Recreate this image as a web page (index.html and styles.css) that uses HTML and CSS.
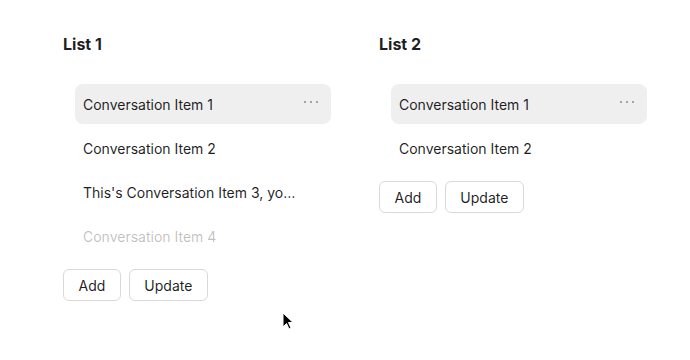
FILE: index.html
```html
<!DOCTYPE html>
<html lang="en">
<head>
    <meta charset="UTF-8">
    <title>Conversation Lists</title>
    <link rel="stylesheet" href="styles.css">
</head>
<body>

    <div class="page">
        <!-- Première liste -->
        <div class="list">
            <div class="list-title">List 1</div>
            <div class="items">
                <div class="item active">
                    <span class="item-label">Conversation Item 1</span>
                    <span class="item-more"><i></i><i></i><i></i></span>
                </div>
                <div class="item">
                    <span class="item-label">Conversation Item 2</span>
                </div>
                <div class="item">
                    <span class="item-label">This's Conversation Item 3, you can click me!</span>
                </div>
                <div class="item disabled">
                    <span class="item-label">Conversation Item 4</span>
                </div>
            </div>
            <div class="actions">
                <button class="btn">Add</button>
                <button class="btn">Update</button>
            </div>
        </div>

        <!-- Deuxième liste -->
        <div class="list">
            <div class="list-title">List 2</div>
            <div class="items">
                <div class="item active">
                    <span class="item-label">Conversation Item 1</span>
                    <span class="item-more"><i></i><i></i><i></i></span>
                </div>
                <div class="item">
                    <span class="item-label">Conversation Item 2</span>
                </div>
            </div>
            <div class="actions">
                <button class="btn">Add</button>
                <button class="btn">Update</button>
            </div>
        </div>
    </div>

    <!-- Curseur de la souris -->
    <svg class="cursor" width="14" height="20" viewBox="0 0 14 20">
        <path d="M1 1 L1 15 L4.5 11.5 L7 17 L9 16 L6.5 10.5 L11 10.5 Z" fill="#000" stroke="#fff" stroke-width="1"/>
    </svg>

</body>
</html>
```

FILE: styles.css
```css
body {
    font-family: Inter, 'Noto Sans', sans-serif;
    margin: 0;
    padding: 0;
    background: #fff;
    color: rgba(0, 0, 0, 0.88);
}

.page {
    display: flex;
    gap: 48px;
    padding: 32px 0 0 63px;
}

.list {
    width: 268px;
    display: flex;
    flex-direction: column;
}

.list-title {
    font-size: 16px;
    font-weight: 700;
    line-height: 24px;
    margin-bottom: 28px;
}

.items {
    display: flex;
    flex-direction: column;
    gap: 4px;
    margin-left: 12px;
    margin-bottom: 13px;
}

.item {
    display: flex;
    align-items: center;
    height: 40px;
    padding: 0 8px;
    border-radius: 8px;
    font-size: 14px;
}

.item.active {
    background: #efefef;
}

.item.disabled {
    color: rgba(0, 0, 0, 0.25);
}

.item-label {
    flex: 1;
    min-width: 0;
    max-width: 217px;
    white-space: nowrap;
    overflow: hidden;
    text-overflow: ellipsis;
}

.item-more {
    display: flex;
    gap: 4px;
    margin-left: auto;
    padding-right: 5px;
    margin-top: -4px;
}

.item-more i {
    width: 2px;
    height: 2px;
    border-radius: 50%;
    background: #888;
}

.actions {
    display: flex;
    gap: 8px;
}

.btn {
    font-family: Inter, 'Noto Sans', sans-serif;
    font-size: 14px;
    height: 32px;
    padding: 0 14.5px;
    background: #fff;
    color: rgba(0, 0, 0, 0.88);
    border: 1px solid #d9d9d9;
    border-radius: 6px;
}

.cursor {
    position: absolute;
    left: 282px;
    top: 312px;
}
```
